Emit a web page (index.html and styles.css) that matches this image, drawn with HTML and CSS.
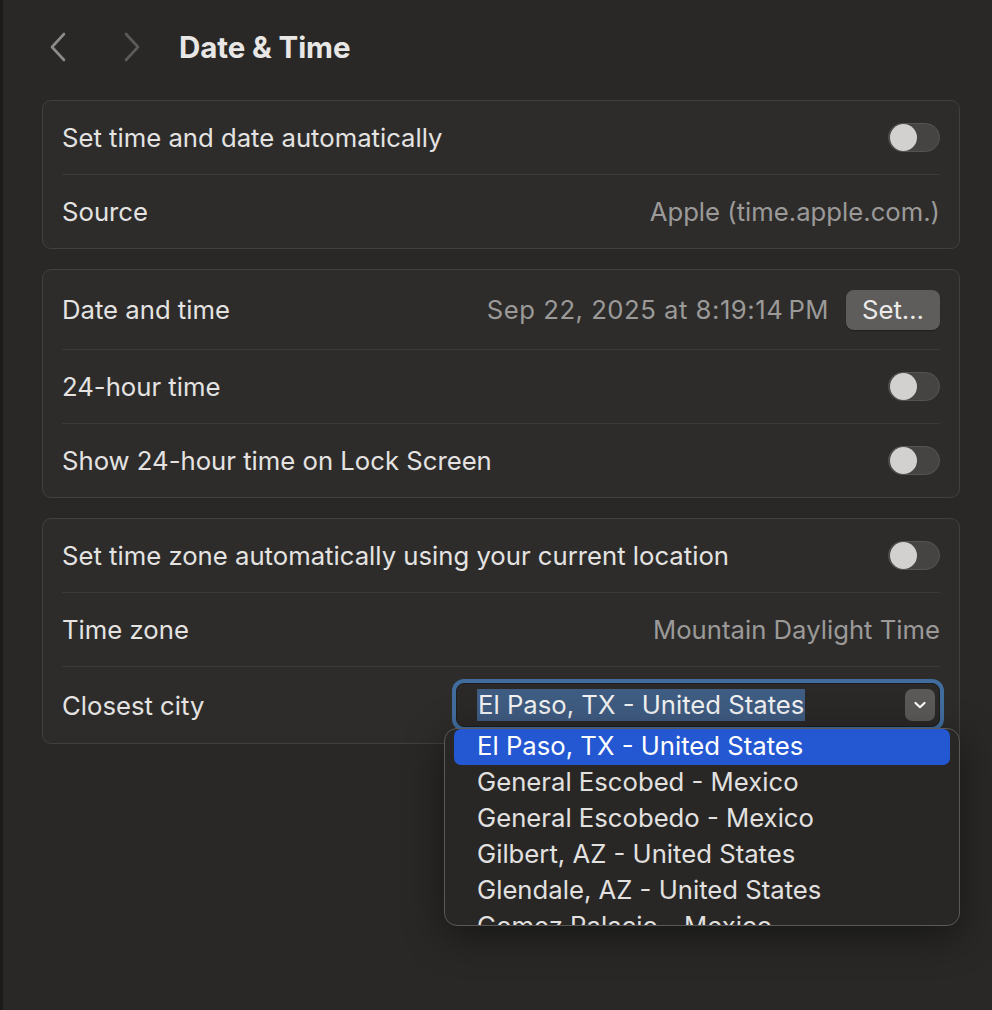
FILE: index.html
```html
<!DOCTYPE html>
<html lang="en">
<head>
  <meta charset="UTF-8">
  <title>Date &amp; Time</title>
  <link rel="stylesheet" href="styles.css">
</head>
<body>
  <div class="ventana">

    <!-- Barra superior -->
    <div class="barra">
      <span class="flecha atras">
        <svg width="20" height="30" viewBox="0 0 20 30"><path d="M16 2 L4 15 L16 28" fill="none" stroke="currentColor" stroke-width="2.6" stroke-linecap="round" stroke-linejoin="round"/></svg>
      </span>
      <span class="flecha adelante">
        <svg width="20" height="30" viewBox="0 0 20 30"><path d="M4 2 L16 15 L4 28" fill="none" stroke="currentColor" stroke-width="2.6" stroke-linecap="round" stroke-linejoin="round"/></svg>
      </span>
      <h1 class="titulo">Date &amp; Time</h1>
    </div>

    <!-- Grupo 1 -->
    <div class="grupo">
      <div class="fila">
        <span class="etiqueta">Set time and date automatically</span>
        <span class="interruptor"></span>
      </div>
      <div class="fila">
        <span class="etiqueta">Source</span>
        <span class="valor">Apple (time.apple.com.)</span>
      </div>
    </div>

    <!-- Grupo 2 -->
    <div class="grupo">
      <div class="fila fila-alta">
        <span class="etiqueta">Date and time</span>
        <span class="derecha">
          <span class="valor fecha">Sep 22, 2025 at 8:19:14&#8239;PM</span>
          <button class="boton-set">Set…</button>
        </span>
      </div>
      <div class="fila">
        <span class="etiqueta">24-hour time</span>
        <span class="interruptor"></span>
      </div>
      <div class="fila">
        <span class="etiqueta">Show 24-hour time on Lock Screen</span>
        <span class="interruptor"></span>
      </div>
    </div>

    <!-- Grupo 3 -->
    <div class="grupo">
      <div class="fila">
        <span class="etiqueta">Set time zone automatically using your current location</span>
        <span class="interruptor"></span>
      </div>
      <div class="fila">
        <span class="etiqueta">Time zone</span>
        <span class="valor">Mountain Daylight Time</span>
      </div>
      <div class="fila fila-combo">
        <span class="etiqueta">Closest city</span>
        <div class="combo">
          <div class="campo">
            <span class="seleccion">El Paso, TX - United States</span>
            <span class="boton-combo">
              <svg width="14" height="10" viewBox="0 0 14 10"><path d="M2.5 3 L7 7.2 L11.5 3" fill="none" stroke="#fff" stroke-width="2.2" stroke-linecap="round" stroke-linejoin="round"/></svg>
            </span>
          </div>
          <ul class="menu">
            <li class="activo">El Paso, TX - United States</li>
            <li>General Escobed - Mexico</li>
            <li>General Escobedo - Mexico</li>
            <li>Gilbert, AZ - United States</li>
            <li>Glendale, AZ - United States</li>
            <li>Gomez Palacio - Mexico</li>
          </ul>
        </div>
      </div>
    </div>

  </div>
</body>
</html>
```

FILE: styles.css
```css
body {
  margin: 0;
  padding: 0;
  font-family: 'Inter', 'Noto Sans', sans-serif;
  background: #292827;
  color: #e4e3e2;
  height: 1010px;
  overflow: hidden;
}

.ventana {
  border-left: 3px solid #1b1b1b;
  height: 100%;
  padding: 0 32px 0 39px;
}

.barra {
  display: flex;
  align-items: center;
  height: 100px;
  padding-bottom: 6px;
  box-sizing: border-box;
}

.flecha {
  display: flex;
  width: 20px;
  height: 30px;
}

.atras {
  color: #8c8b8a;
  margin-left: 6px;
}

.adelante {
  color: #5c5b5a;
  margin-left: 54px;
}

.titulo {
  margin: 0 0 0 37px;
  font-size: 29.5px;
  font-weight: 700;
  color: #e8e7e6;
  letter-spacing: -0.1px;
}

.grupo {
  background: #2d2c2b;
  border: 1px solid #41403f;
  border-radius: 9px;
  margin-bottom: 20px;
}

.fila {
  display: flex;
  align-items: center;
  justify-content: space-between;
  height: 73px;
  margin: 0 19px;
  font-size: 25.7px;
}

.fila + .fila {
  border-top: 1px solid #3b3a39;
}

.fila-alta {
  height: 79px;
}

.fila-combo {
  height: 76px;
}

.etiqueta {
  color: #e4e3e2;
}

.valor {
  color: #9b9a99;
}

.fecha {
  letter-spacing: 0.5px;
}

.derecha {
  display: flex;
  align-items: center;
  gap: 17px;
}

.boton-set {
  font-family: inherit;
  font-size: 25.7px;
  color: #ecebea;
  background: #5e5d5c;
  border: none;
  border-radius: 8px;
  width: 94px;
  height: 40px;
  padding: 0;
  box-shadow: 0 1px 1px rgba(0, 0, 0, 0.3);
}

.interruptor {
  position: relative;
  width: 50px;
  height: 27px;
  border-radius: 15px;
  background: #454443;
  border: 1px solid #555453;
}

.interruptor::after {
  content: "";
  position: absolute;
  left: 1px;
  top: 0;
  width: 27px;
  height: 27px;
  border-radius: 50%;
  background: #d2d1d0;
}

.combo {
  position: relative;
}

.campo {
  display: flex;
  align-items: center;
  justify-content: space-between;
  width: 484px;
  height: 44px;
  box-sizing: border-box;
  padding: 0 4px 0 20px;
  background: #2a2928;
  border: 1px solid #1e1e1e;
  border-radius: 8px;
  box-shadow: 0 0 0 4px #416d9e;
}

.seleccion {
  background: #3f5c82;
  color: #f2f2f2;
  padding: 2px 1px;
  line-height: 28px;
}

.boton-combo {
  display: flex;
  align-items: center;
  justify-content: center;
  width: 30px;
  height: 32px;
  border-radius: 7px;
  background: #5b5a59;
}

.menu {
  position: absolute;
  left: -12px;
  top: 45px;
  width: 516px;
  height: 198px;
  box-sizing: border-box;
  margin: 0;
  padding: 0 9px;
  list-style: none;
  overflow: hidden;
  background: #282726;
  border: 1px solid #5a5958;
  border-radius: 13px;
  box-shadow: 0 10px 40px rgba(0, 0, 0, 0.45);
  z-index: 10;
}

.menu li {
  height: 36px;
  line-height: 33px;
  padding-left: 23px;
  color: #e2e1e0;
  font-size: 25.7px;
  white-space: nowrap;
}

.menu li.activo {
  background: #2458d2;
  color: #fff;
  border-radius: 7px;
}
```
